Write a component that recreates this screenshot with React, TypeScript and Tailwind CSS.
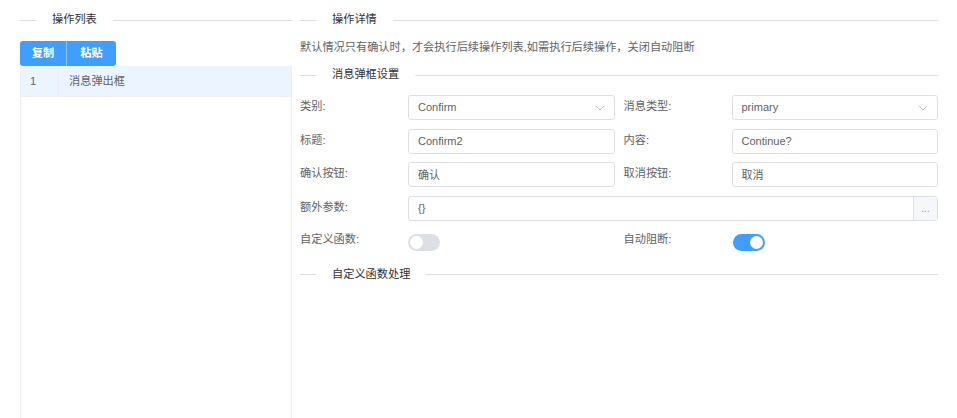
import React from "react";

const font = { fontFamily: '"Liberation Sans", "Noto Sans CJK SC", sans-serif' };

function Divider({ title }: { title: string }) {
  return (
    <div className="flex h-[40px] shrink-0 items-center">
      <div className="h-px w-[16px] bg-[#dcdfe6]" />
      <div className="px-[16px] text-[11.2px] leading-none text-[#303133]">{title}</div>
      <div className="h-px flex-1 bg-[#dcdfe6]" />
    </div>
  );
}

function Chevron() {
  return (
    <svg width="10" height="6" viewBox="0 0 10 6" className="shrink-0">
      <path d="M1 1 L5 5 L9 1" fill="none" stroke="#c0c4cc" strokeWidth="1" />
    </svg>
  );
}

function Field({ label, value, select }: { label: string; value: string; select?: boolean }) {
  return (
    <div className="flex h-[25px]">
      <div className="w-[108px] shrink-0 pt-[4px] text-[11.2px] leading-[14px] text-[#606266]">{label}</div>
      <div className="flex flex-1 items-center justify-between rounded-[3px] border border-[#dcdfe6] bg-white pl-[9px] pr-[9px] text-[11px] text-[#606266]">
        <span>{value}</span>
        {select && <Chevron />}
      </div>
    </div>
  );
}

function Switch({ on }: { on?: boolean }) {
  return (
    <div
      className={
        on
          ? "flex h-[17px] w-[32px] items-center justify-end rounded-full bg-[#409eff] px-[2px]"
          : "flex h-[17px] w-[32px] items-center justify-start rounded-full bg-[#dcdfe6] px-[2px]"
      }
    >
      <div className="h-[13px] w-[13px] rounded-full bg-white" />
    </div>
  );
}

export default function App() {
  return (
    <div className="flex h-[418px] overflow-hidden bg-white" style={font}>
      <div className="ml-[20px] flex w-[272px] shrink-0 flex-col">
        <Divider title="操作列表" />
        <div className="mt-[1px] flex h-[25px] w-[96px] shrink-0 overflow-hidden rounded-[3px] bg-[#409eff] text-[11.2px] font-bold text-white">
          <div className="flex w-[47px] items-center justify-center border-r border-[#8cc5ff]">复制</div>
          <div className="flex flex-1 items-center justify-center">粘贴</div>
        </div>
        <div className="h-[400px] shrink-0 border-x border-[#ebeef5]">
          <div className="flex h-[31px] border-b border-[#ebeef5] bg-[#ecf5ff] text-[11.2px] text-[#606266]">
            <div className="flex w-[38px] items-center border-r border-[#ebeef5] pl-[9px]">1</div>
            <div className="flex items-center pl-[10px]">消息弹出框</div>
          </div>
        </div>
      </div>
      <div className="ml-[8px] flex w-[638px] shrink-0 flex-col">
        <Divider title="操作详情" />
        <div className="h-[15px] shrink-0 text-[11.2px] leading-[15px] text-[#606266]">
          默认情况只有确认时，才会执行后续操作列表,如需执行后续操作，关闭自动阻断
        </div>
        <Divider title="消息弹框设置" />
        <div className="grid shrink-0 grid-cols-2 gap-x-[9px] gap-y-[8.67px]">
          <Field label="类别:" value="Confirm" select />
          <Field label="消息类型:" value="primary" select />
          <Field label="标题:" value="Confirm2" />
          <Field label="内容:" value="Continue?" />
          <Field label="确认按钮:" value="确认" />
          <Field label="取消按钮:" value="取消" />
          <div className="col-span-2 flex h-[25px]">
            <div className="w-[108px] shrink-0 pt-[4px] text-[11.2px] leading-[14px] text-[#606266]">额外参数:</div>
            <div className="flex flex-1 overflow-hidden rounded-[3px] border border-[#dcdfe6] text-[11px] text-[#606266]">
              <div className="flex flex-1 items-center pl-[9px]">{"{}"}</div>
              <div className="flex w-[24px] items-center justify-center border-l border-[#dcdfe6] bg-[#f5f7fa] text-[10px] text-[#909399]">
                ...
              </div>
            </div>
          </div>
          <div className="flex h-[25px]">
            <div className="w-[108px] shrink-0 pt-[2px] text-[11.2px] leading-[14px] text-[#606266]">自定义函数:</div>
            <div className="flex items-center">
              <Switch />
            </div>
          </div>
          <div className="flex h-[25px]">
            <div className="w-[109px] shrink-0 pt-[2px] text-[11.2px] leading-[14px] text-[#606266]">自动阻断:</div>
            <div className="flex items-center">
              <Switch on />
            </div>
          </div>
        </div>
        <Divider title="自定义函数处理" />
      </div>
    </div>
  );
}
